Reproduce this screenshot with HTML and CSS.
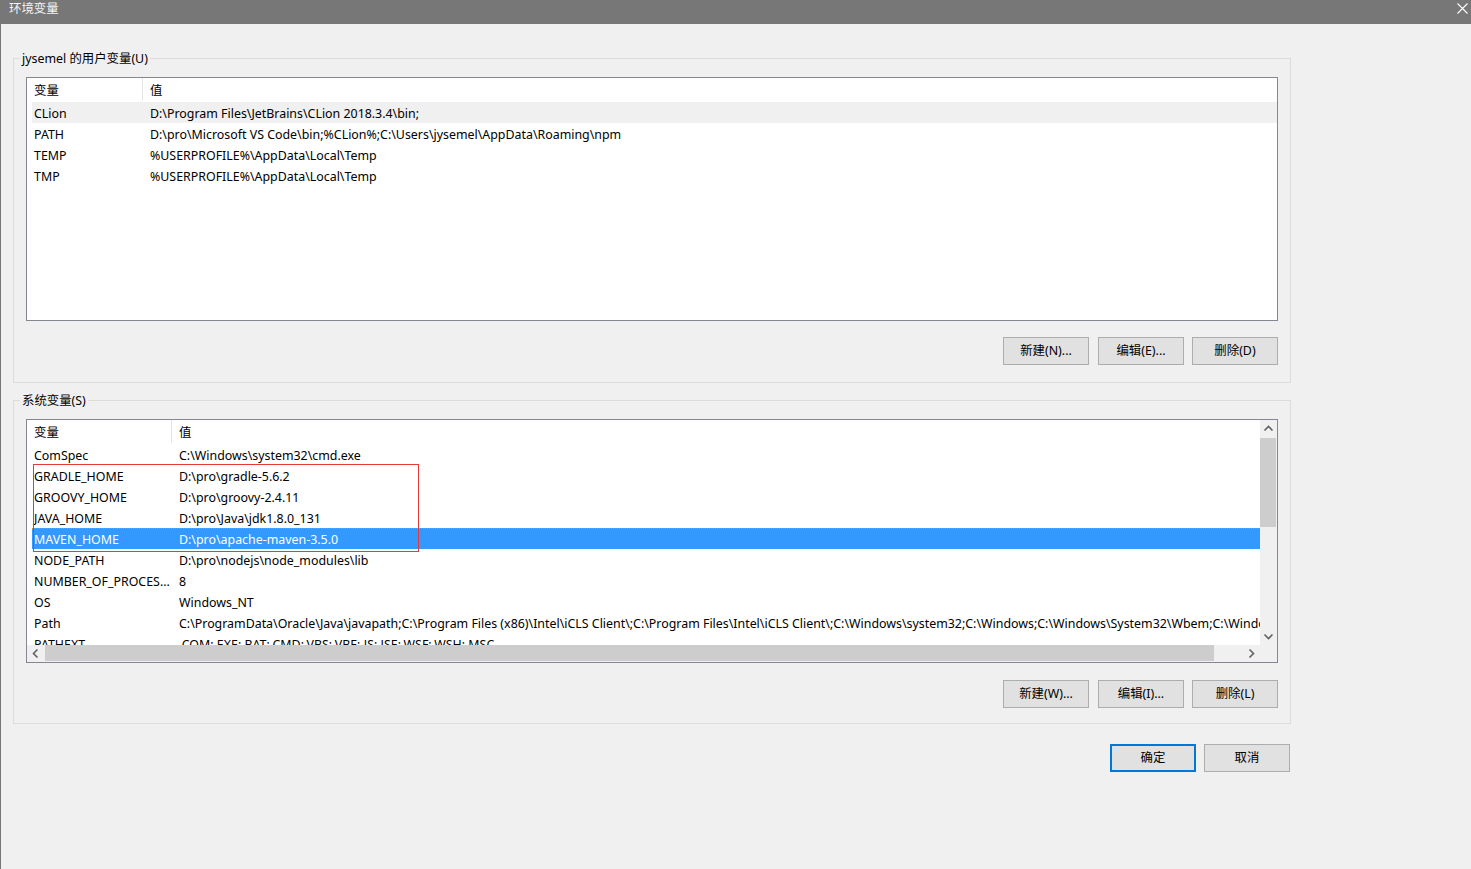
FILE: index.html
```html
<!DOCTYPE html>
<html lang="zh-CN">
<head>
<meta charset="utf-8">
<title>环境变量</title>
<link rel="stylesheet" href="styles.css">
</head>
<body>
<div class="titlebar">
  <span class="title">环境变量</span>
  <svg class="close" width="11" height="11" viewBox="0 0 11 11"><path d="M0.5 0.5 L10.5 10.5 M10.5 0.5 L0.5 10.5" stroke="#fff" stroke-width="1.1" fill="none"/></svg>
</div>
<div class="window">
  <section class="group group-user">
    <div class="legend">jysemel 的用户变量(U)</div>
    <div class="list list-user">
      <div class="row head"><span class="c1">变量</span><span class="c2">值</span></div>
      <div class="row hover"><span class="c1">CLion</span><span class="c2">D:\Program Files\JetBrains\CLion 2018.3.4\bin;</span></div>
      <div class="row"><span class="c1">PATH</span><span class="c2">D:\pro\Microsoft VS Code\bin;%CLion%;C:\Users\jysemel\AppData\Roaming\npm</span></div>
      <div class="row"><span class="c1">TEMP</span><span class="c2">%USERPROFILE%\AppData\Local\Temp</span></div>
      <div class="row"><span class="c1">TMP</span><span class="c2">%USERPROFILE%\AppData\Local\Temp</span></div>
    </div>
    <div class="btnrow">
      <button class="btn">新建(N)...</button>
      <button class="btn">编辑(E)...</button>
      <button class="btn">删除(D)</button>
    </div>
  </section>

  <section class="group group-sys">
    <div class="legend">系统变量(S)</div>
    <div class="list list-sys">
      <div class="viewport">
        <div class="row head"><span class="c1">变量</span><span class="c2">值</span></div>
        <div class="row"><span class="c1">ComSpec</span><span class="c2">C:\Windows\system32\cmd.exe</span></div>
        <div class="row"><span class="c1">GRADLE_HOME</span><span class="c2">D:\pro\gradle-5.6.2</span></div>
        <div class="row"><span class="c1">GROOVY_HOME</span><span class="c2">D:\pro\groovy-2.4.11</span></div>
        <div class="row"><span class="c1">JAVA_HOME</span><span class="c2">D:\pro\Java\jdk1.8.0_131</span></div>
        <div class="row selected"><span class="c1">MAVEN_HOME</span><span class="c2">D:\pro\apache-maven-3.5.0</span></div>
        <div class="row"><span class="c1">NODE_PATH</span><span class="c2">D:\pro\nodejs\node_modules\lib</span></div>
        <div class="row"><span class="c1">NUMBER_OF_PROCES...</span><span class="c2">8</span></div>
        <div class="row"><span class="c1">OS</span><span class="c2">Windows_NT</span></div>
        <div class="row"><span class="c1">Path</span><span class="c2">C:\ProgramData\Oracle\Java\javapath;C:\Program Files (x86)\Intel\iCLS Client\;C:\Program Files\Intel\iCLS Client\;C:\Windows\system32;C:\Windows;C:\Windows\System32\Wbem;C:\Windows\System32\WindowsPowerShell\v1.0\</span></div>
        <div class="row"><span class="c1">PATHEXT</span><span class="c2">.COM;.EXE;.BAT;.CMD;.VBS;.VBE;.JS;.JSE;.WSF;.WSH;.MSC</span></div>
        <div class="mark"></div>
      </div>
      <div class="vscroll">
        <svg class="arrow" width="17" height="17" viewBox="0 0 17 17"><path d="M4.5 10.5 L8.5 6.5 L12.5 10.5" stroke="#606060" stroke-width="1.6" fill="none"/></svg>
        <div class="vthumb"></div>
        <div class="vspace"></div>
        <svg class="arrow" width="17" height="17" viewBox="0 0 17 17"><path d="M4.5 6.5 L8.5 10.5 L12.5 6.5" stroke="#606060" stroke-width="1.6" fill="none"/></svg>
      </div>
      <div class="hscroll">
        <svg class="arrow" width="17" height="17" viewBox="0 0 17 17"><path d="M10.5 4.5 L6.5 8.5 L10.5 12.5" stroke="#606060" stroke-width="1.6" fill="none"/></svg>
        <div class="hthumb"></div>
        <svg class="arrow" width="17" height="17" viewBox="0 0 17 17"><path d="M6.5 4.5 L10.5 8.5 L6.5 12.5" stroke="#606060" stroke-width="1.6" fill="none"/></svg>
      </div>
      <div class="corner"></div>
    </div>
    <div class="btnrow">
      <button class="btn">新建(W)...</button>
      <button class="btn">编辑(I)...</button>
      <button class="btn">删除(L)</button>
    </div>
  </section>

  <div class="footer">
    <button class="btn default">确定</button>
    <button class="btn">取消</button>
  </div>
</div>
</body>
</html>
```

FILE: styles.css
```css
* { box-sizing: border-box; }
html, body {
  margin: 0;
  padding: 0;
  height: 100%;
  background: #f0f0f0;
  font-family: "Noto Sans", "Noto Sans CJK SC", sans-serif;
  font-size: 12.4px;
  color: #000;
  overflow: hidden;
}
.titlebar {
  height: 24px;
  background: #777777;
  display: flex;
  align-items: center;
  justify-content: space-between;
  padding: 0 3px 0 9px;
}
.title {
  color: #f4f4f4;
  font-size: 12.4px;
  line-height: 16px;
  margin-top: -6px;
}
.close { margin-top: -8px; margin-right: 0; }
.window {
  border-left: 1px solid #777777;
  padding-left: 12px;
  height: calc(100% - 24px);
  padding-top: 34px;
}
.group {
  width: 1278px;
  border: 1px solid #dcdcdc;
  padding: 0 12px 17px 12px;
}
.group-sys {
  margin-top: 17px;
  padding-bottom: 15px;
}
.legend {
  width: fit-content;
  height: 16px;
  line-height: 18px;
  margin: -9px 0 0 -6px;
  padding: 0 2px;
  background: #f0f0f0;
  white-space: nowrap;
}
.list {
  margin-top: 11px;
  height: 244px;
  border: 1px solid #828790;
  background: #fff;
}
.row {
  display: flex;
  height: 21px;
  line-height: 23px;
  margin-left: 5px;
  white-space: nowrap;
}
.row .c1 { padding-left: 2px; flex: none; overflow: hidden; height: 21px; }
.row .c2 { padding-left: 7px; }
.list-user .c1 { width: 111px; }
.list-sys .c1 { width: 140px; }
.row.head { height: 24px; line-height: 26px; }
.row.head .c1 { border-right: 1px solid #e5e5e5; height: 23px; }
.row.hover { background: #f0f0f0; }
.row.selected {
  background: #3399ff;
  color: #fff;
  border-top: 1px dotted #d98a3a;
  line-height: 21px;
}
.row.selected .c1 { height: 20px; }

.list-sys {
  display: grid;
  grid-template-columns: 1fr 17px;
  grid-template-rows: 1fr 17px;
}
.viewport {
  position: relative;
  overflow: hidden;
}
.mark {
  position: absolute;
  left: 6px;
  top: 44px;
  width: 386px;
  height: 88px;
  border: 1px solid #e5393a;
}
.vscroll {
  background: #f0f0f0;
  display: flex;
  flex-direction: column;
}
.vscroll .arrow { flex: none; }
.vthumb {
  height: 89px;
  margin-top: 1px;
  background: #cdcdcd;
  width: 16px;
}
.vspace { flex: 1; }
.hscroll {
  background: #f0f0f0;
  display: flex;
  align-items: center;
}
.hscroll .arrow { flex: none; }
.hthumb {
  margin-left: 1px;
  width: 1169px;
  height: 16px;
  align-self: flex-start;
  background: #cdcdcd;
}
.hscroll .arrow:last-child { margin-left: auto; margin-right: 0; }
.corner { background: #f0f0f0; }

.btnrow {
  display: flex;
  justify-content: flex-end;
  gap: 9px;
  margin-top: 16px;
}
.group-sys .btnrow { margin-top: 17px; }
.btnrow .btn:last-child { margin-left: -1px; }
.btn {
  width: 86px;
  height: 28px;
  border: 1px solid #adadad;
  background: #e1e1e1;
  font-family: "Noto Sans", "Noto Sans CJK SC", sans-serif;
  font-size: 12.4px;
  line-height: 24px;
  color: #000;
  padding: 0;
}
.btn.default { border: 2px solid #0078d7; line-height: 22px; }
.footer {
  width: 1278px;
  display: flex;
  justify-content: flex-end;
  gap: 8px;
  margin-top: 20px;
  padding-right: 1px;
}
```
